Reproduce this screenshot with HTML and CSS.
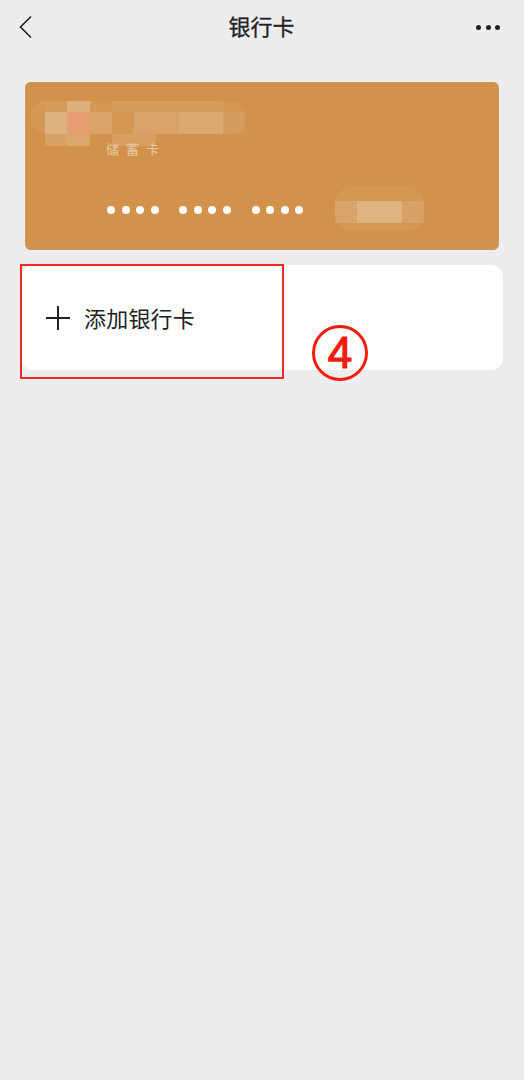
FILE: index.html
```html
<!DOCTYPE html>
<html lang="zh-CN">
<head>
<meta charset="utf-8">
<title>银行卡</title>
<link rel="stylesheet" href="styles.css">
</head>
<body>
<header class="topbar">
  <svg class="back" width="14" height="24" viewBox="0 0 14 24"><path d="M12 1.5 1.5 12 12 22.5" fill="none" stroke="#222" stroke-width="1.6"/></svg>
  <h1 class="title">银行卡</h1>
  <div class="more"><i></i><i></i><i></i></div>
</header>
<section class="card">
  <span class="card-type">储蓄卡</span>
  <svg class="mosaic" width="474" height="168" viewBox="0 0 474 168">
    <g fill="#fff">
      <rect x="5" y="19" width="216" height="33" rx="16" opacity=".05"/>
      <rect x="20" y="19" width="22" height="44" rx="4" opacity=".05"/>
      <rect x="87" y="19" width="111" height="11" opacity=".05"/>
      <rect x="20" y="30" width="22" height="22" opacity=".22"/>
      <rect x="64" y="30" width="23" height="22" opacity=".12"/>
      <rect x="109" y="30" width="45" height="22" opacity=".12"/>
      <rect x="154" y="30" width="44" height="22" opacity=".18"/>
      <rect x="198" y="30" width="22" height="22" opacity=".06"/>
      <rect x="20" y="52" width="22" height="12" opacity=".1"/>
      <rect x="42" y="52" width="23" height="12" opacity=".2"/>
      <rect x="87" y="52" width="44" height="12" opacity=".12"/>
      <rect x="310" y="105" width="89" height="44" rx="16" opacity=".05"/>
      <rect x="310" y="119" width="22" height="22" opacity=".13"/>
      <rect x="332" y="119" width="45" height="22" opacity=".27"/>
      <rect x="377" y="119" width="22" height="22" opacity=".1"/>
    </g>
    <rect x="42" y="30" width="23" height="22" fill="#e59d71"/>
    <rect x="42" y="19" width="23" height="11" fill="#dcb07a"/>
  </svg>
  <div class="number">
    <div class="group"><i></i><i></i><i></i><i></i></div>
    <div class="group"><i></i><i></i><i></i><i></i></div>
    <div class="group"><i></i><i></i><i></i><i></i></div>
  </div>
</section>
<section class="add-row">
  <svg class="plus" width="24" height="24" viewBox="0 0 24 24"><path d="M0 12h24M12 0v24" stroke="#222" stroke-width="2" fill="none"/></svg>
  <span class="add-label">添加银行卡</span>
  <div class="highlight"></div>
  <div class="step">4</div>
</section>
</body>
</html>
```
FILE: styles.css
```css
* { box-sizing: border-box; }
html, body { margin: 0; padding: 0; }
body {
  background: #ededed;
  height: 1080px;
  overflow: hidden;
  font-family: "Noto Sans CJK SC", "Liberation Sans", sans-serif;
  color: #222;
}
.topbar {
  position: relative;
  height: 56px;
  display: flex;
  align-items: center;
  justify-content: space-between;
  padding: 0 24px 0 19px;
}
.back { display: block; margin-top: -2px; }
.title {
  margin: 0;
  font-size: 22px;
  font-weight: 400;
  -webkit-text-stroke: .3px #222;
  line-height: 30px;
  position: absolute;
  left: -1px;
  right: 0;
  top: 10px;
  text-align: center;
}
.more { display: flex; gap: 4.5px; margin-top: -1px; }
.more i { width: 5px; height: 5px; border-radius: 50%; background: #222; }
.card {
  position: relative;
  height: 168px;
  margin: 26px 25px 0;
  background: #d2924b;
  border-radius: 6px;
  box-shadow: inset 0 0 0 1px #c99a63;
}
.mosaic { position: absolute; left: 0; top: 0; }
.card-type {
  position: absolute;
  left: 81px;
  top: 60px;
  font-size: 13px;
  line-height: 13px;
  letter-spacing: 7px;
  color: rgba(255, 255, 255, .5);
}
.number {
  position: absolute;
  left: 82px;
  top: 124px;
  display: flex;
  gap: 20.5px;
}
.group { display: flex; gap: 6.6px; }
.group i { width: 8px; height: 8px; border-radius: 50%; background: #fff; }
.add-row {
  position: relative;
  height: 105px;
  margin: 15px 21px 0 21px;
  padding-left: 25px;
  display: flex;
  align-items: center;
  gap: 14px;
  background: #fff;
  border-radius: 12px;
}
.plus { display: block; margin-top: 1px; }
.add-label { font-size: 22px; line-height: 30px; margin-top: -2px; letter-spacing: .2px; }
.highlight {
  position: absolute;
  left: -1px;
  top: -1px;
  width: 264px;
  height: 115px;
  border: 2px solid #ee2a24;
}
.step {
  position: absolute;
  left: 291px;
  top: 60px;
  width: 56px;
  height: 56px;
  border: 3px solid #f01c10;
  border-radius: 50%;
  color: #f01c10;
  font-family: "Liberation Sans", sans-serif;
  font-weight: 400;
  -webkit-text-stroke: 1.2px #f01c10;
  font-size: 44px;
  line-height: 50px;
  text-align: center;
}
```
